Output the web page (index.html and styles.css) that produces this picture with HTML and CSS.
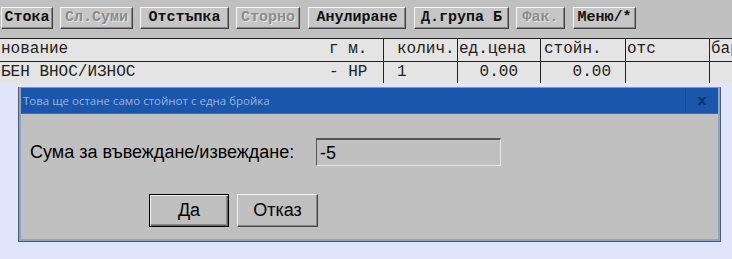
FILE: index.html
```html
<!DOCTYPE html>
<html lang="bg">
<head>
  <meta charset="UTF-8">
  <title>Каса</title>
  <link rel="stylesheet" href="styles.css">
</head>
<body>
  <div class="toolbar">
    <button class="tb-btn">Стока</button>
    <button class="tb-btn" disabled>Сл.Суми</button>
    <button class="tb-btn">Отстъпка</button>
    <button class="tb-btn" disabled>Сторно</button>
    <button class="tb-btn">Анулиране</button>
    <button class="tb-btn">Д.група Б</button>
    <button class="tb-btn" disabled>Фак.</button>
    <button class="tb-btn">Меню/*</button>
  </div>

  <div class="grid">
    <div class="row head">
      <div class="c1">нование</div>
      <div class="c2">г м.</div>
      <div class="c3">колич.</div>
      <div class="c4">ед.цена</div>
      <div class="c5">стойн.</div>
      <div class="c6">отс</div>
      <div class="c7">бар</div>
    </div>
    <div class="row">
      <div class="c1">БЕН ВНОС/ИЗНОС</div>
      <div class="c2">- НР</div>
      <div class="c3">1</div>
      <div class="c4 num">0.00</div>
      <div class="c5 num">0.00</div>
      <div class="c6"></div>
      <div class="c7"></div>
    </div>
  </div>

  <div class="dialog">
    <div class="title-bar">
      <span class="title">Това ще остане само стойнот с една бройка</span>
      <span class="close">x</span>
    </div>
    <div class="dialog-body">
      <div class="field">
        <label class="field-label" for="sum">Сума за въвеждане/извеждане:</label>
        <input id="sum" class="field-input" type="text" value="-5">
      </div>
      <div class="actions">
        <button class="dlg-btn default">Да</button>
        <button class="dlg-btn">Отказ</button>
      </div>
    </div>
  </div>
</body>
</html>
```

FILE: styles.css
```css
body {
  margin: 0;
  background: #dfe6fb;
  font-family: 'Liberation Mono', monospace;
  overflow: hidden;
}

/* toolbar */
.toolbar {
  background: #c0c0c0;
  height: 39px;
  box-sizing: border-box;
  padding: 7px 0 0 1px;
  display: flex;
  gap: 8px;
  align-items: flex-start;
  border-bottom: 1px solid #222;
}
.tb-btn {
  height: 22px;
  padding: 0;
  margin: 0;
  font-family: 'Liberation Mono', monospace;
  font-size: 15px;
  font-weight: bold;
  color: #111;
  background: #c6c6c6;
  border: 1px solid;
  border-color: #f4f4f4 #404040 #404040 #f4f4f4;
  box-shadow: inset -1px -1px #8a8a8a;
  line-height: 18px;
  text-align: center;
}
.tb-btn:disabled {
  color: #8c8c8c;
  text-shadow: 1px 1px 0 #e6e6e6;
}
/* widths as the program sets them */
.tb-btn:nth-child(1) { width: 52px; margin-right: -1px; }
.tb-btn:nth-child(2) { width: 73px; margin-right: -1px; }
.tb-btn:nth-child(3) { width: 89px; margin-right: -1px; }
.tb-btn:nth-child(4) { width: 64px; }
.tb-btn:nth-child(5) { width: 98px; }
.tb-btn:nth-child(6) { width: 95px; margin-right: -1px; }
.tb-btn:nth-child(7) { width: 49px; }
.tb-btn:nth-child(8) { width: 63px; }

/* table */
.grid {
  background: #e4e4e4;
  font-size: 16px;
  color: #222;
}
.row {
  display: grid;
  grid-template-columns: 320px 63px 74px 83px 85px 84px 1fr;
  height: 21px;
  line-height: 21px;
  white-space: nowrap;
}
.row.head {
  border-bottom: 1px solid #222;
  height: 22px;
}
.row > div {
  overflow: hidden;
  box-sizing: border-box;
}
.c1 { padding-left: 1px; }
.c2 { padding-left: 9px; }
.c3, .c4, .c5, .c6, .c7 { border-left: 1px solid #222; }
.c3 { padding-left: 13px; }
.c4 { padding-left: 1px; }
.c5 { padding-left: 3px; }
.c6 { padding-left: 1px; }
.c7 { padding-left: 1px; }
.c4.num { text-align: right; padding-right: 22px; }
.c5.num { text-align: right; padding-right: 14px; }

/* dialog */
.dialog {
  margin: 4px 0 0 18px;
  width: 703px;
  box-sizing: border-box;
  border: 1px solid #4e5c72;
  border-top-color: #7f96b8;
  background: #8ea4c6;
  padding: 0 2px 2px 2px;
}
.title-bar {
  height: 25px;
  background: #1a56ac;
  display: flex;
  align-items: center;
  justify-content: space-between;
  border-bottom: 1px solid #3e6aa8;
}
.title {
  font-family: 'Open Sans', sans-serif;
  font-size: 11.5px;
  color: #98b3dc;
  padding-left: 2px;
}
.close {
  width: 33px;
  height: 25px;
  box-sizing: border-box;
  border-left: 1px solid #164c98;
  text-align: center;
  font-family: 'DejaVu Sans', sans-serif;
  font-weight: bold;
  font-size: 14px;
  line-height: 24px;
  color: #0b3470;
}
.dialog-body {
  background: #c0c0c0;
  height: 125px;
  box-sizing: border-box;
  padding: 24px 0 0 9px;
  font-family: 'Liberation Sans', sans-serif;
  font-size: 18px;
  color: #000;
}
.field {
  display: flex;
  align-items: center;
}
.field-label {
  width: 286px;
}
.field-input {
  width: 185px;
  height: 28px;
  box-sizing: border-box;
  margin: 0;
  padding: 2px 0 0 3px;
  font-family: 'Liberation Sans', sans-serif;
  font-size: 18px;
  background: #c0c0c0;
  border: 1px solid;
  border-color: #555 #e4e4e4 #e4e4e4 #555;
  border-top-width: 2px;
  outline: none;
}
.actions {
  display: flex;
  gap: 8px;
  padding: 28px 0 0 119px;
}
.dlg-btn {
  width: 81px;
  height: 33px;
  margin: 0;
  font-family: 'Liberation Sans', sans-serif;
  font-size: 18px;
  color: #000;
  background: #c0c0c0;
  border: 1px solid;
  border-color: #f2f2f2 #444 #444 #f2f2f2;
  box-shadow: inset -1px -1px #888;
}
.dlg-btn.default {
  width: 80px;
  border: 1px solid #000;
  box-shadow: inset 1px 1px #f2f2f2, inset -1px -1px #666, inset -2px -2px #888;
}
```
